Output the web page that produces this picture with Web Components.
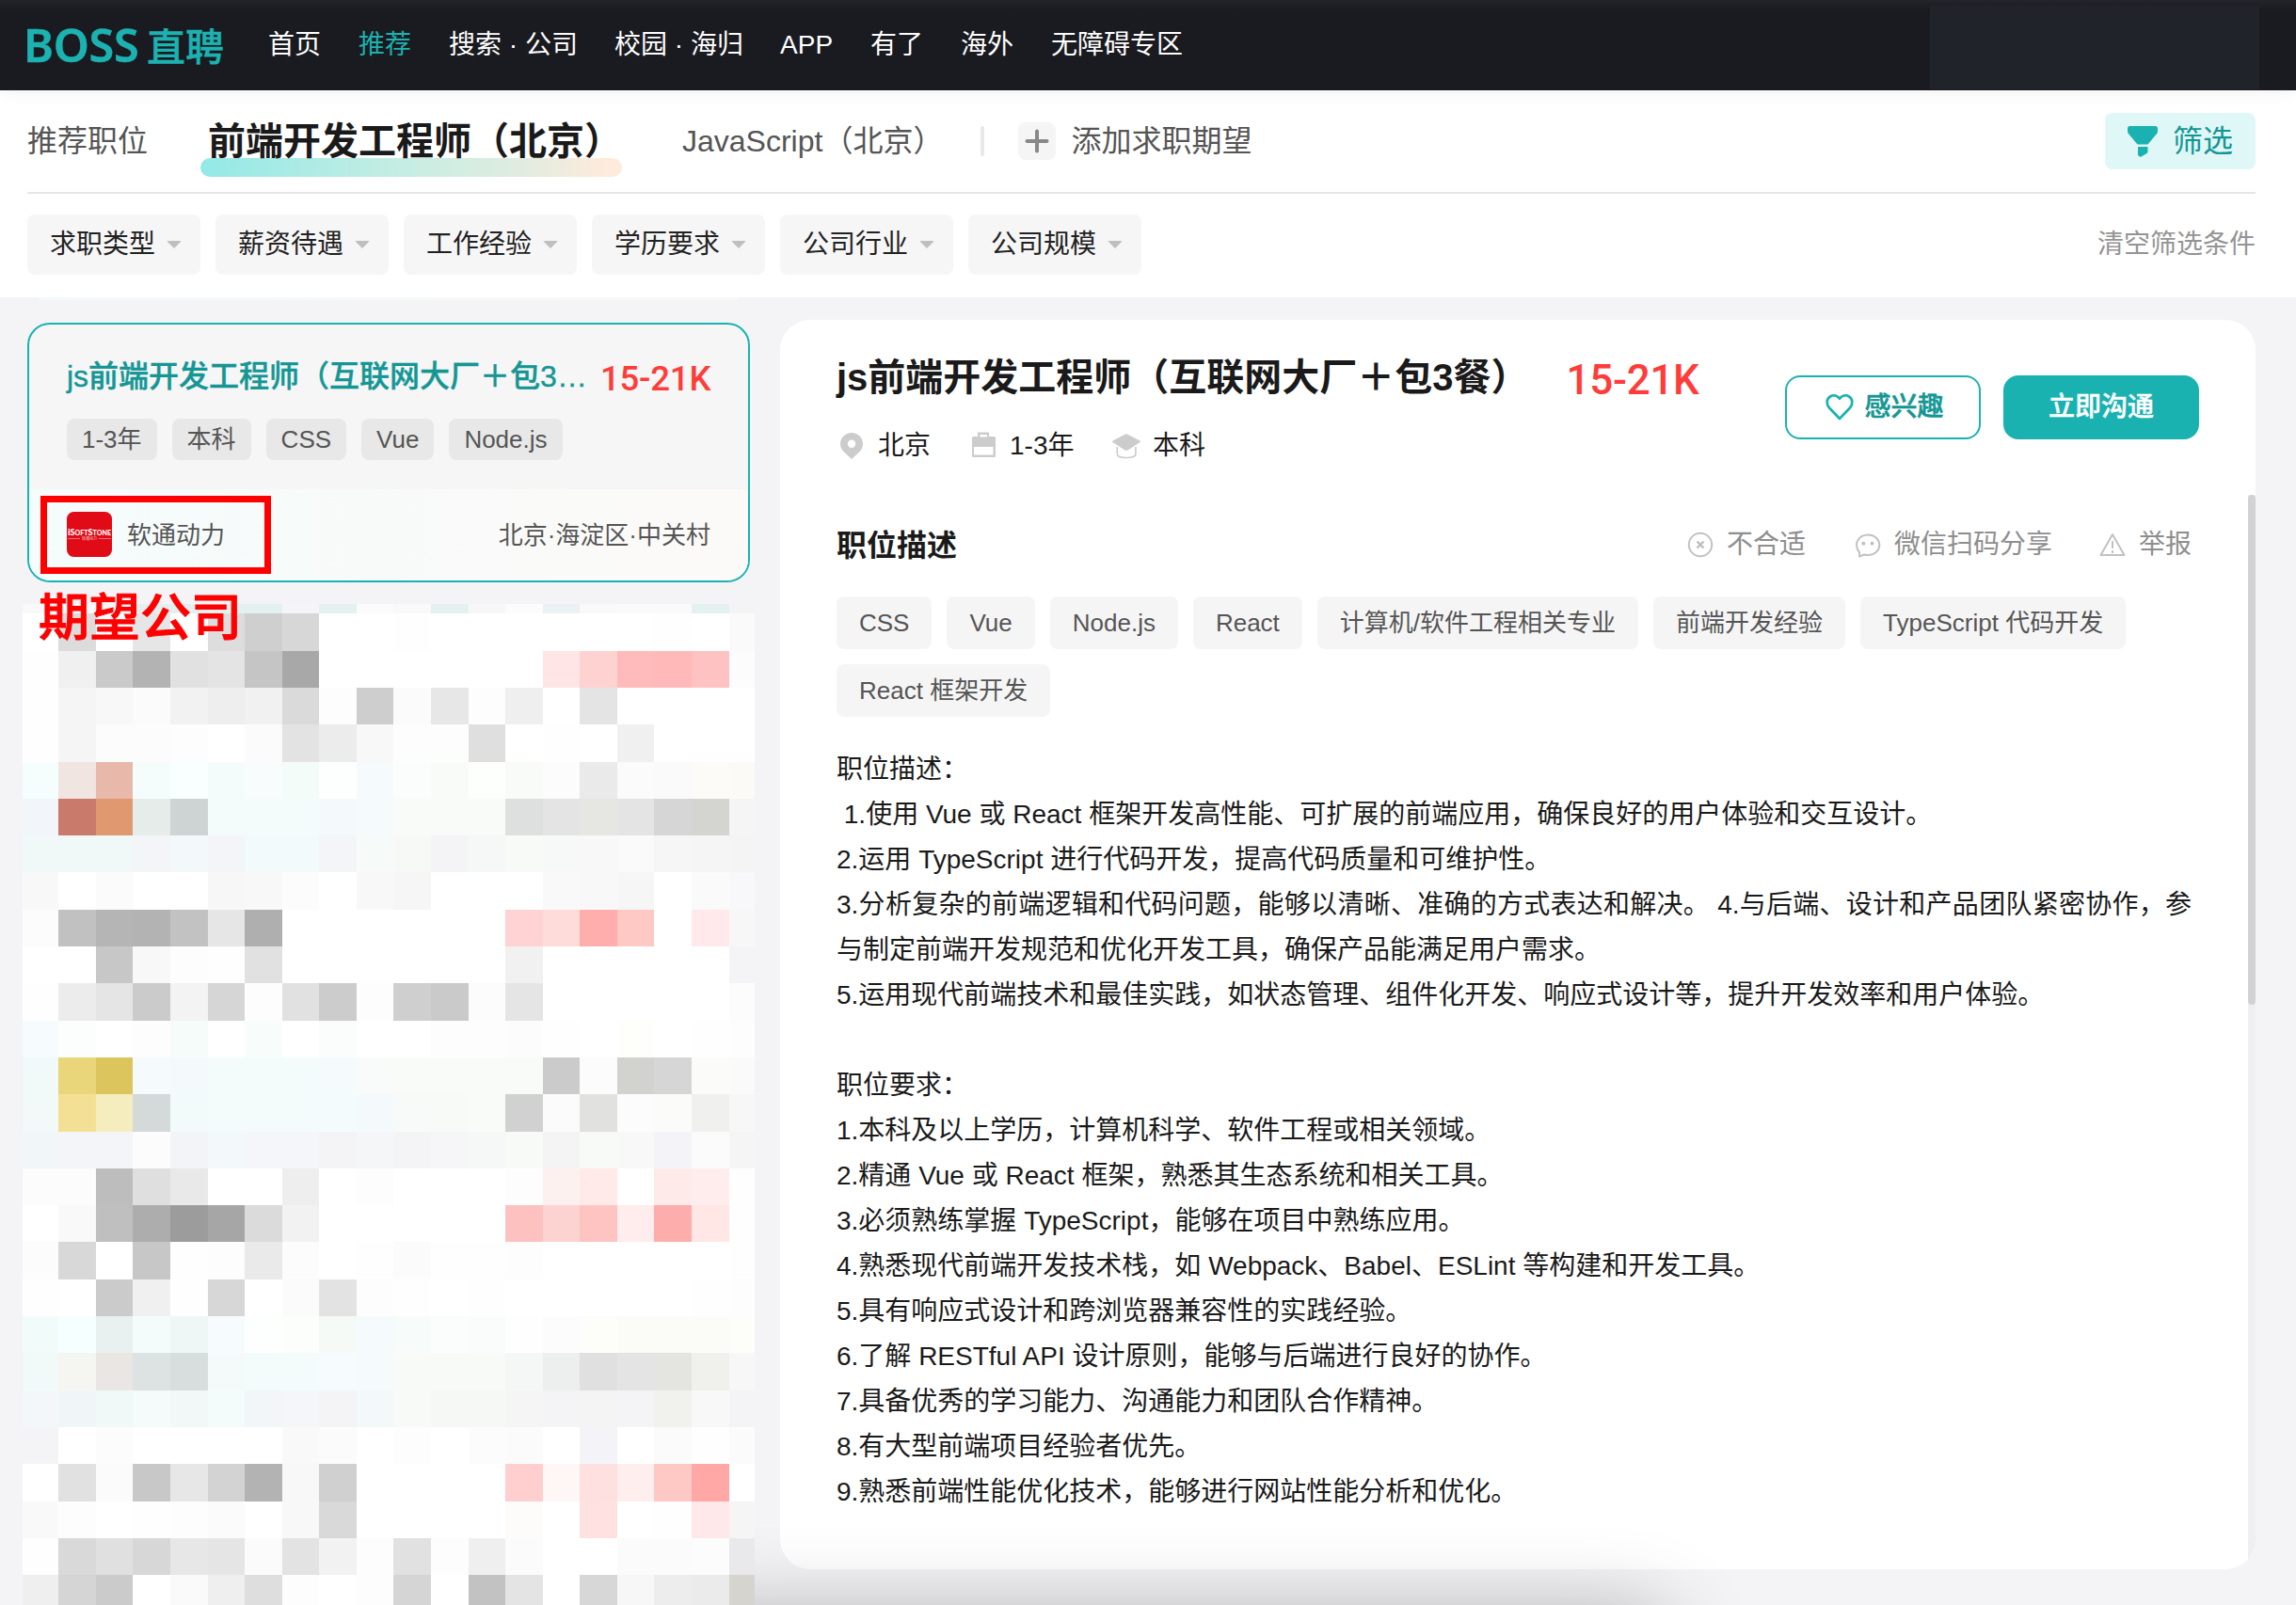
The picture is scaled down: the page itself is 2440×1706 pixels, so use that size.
<!DOCTYPE html>
<html lang="zh-CN">
<head>
<meta charset="utf-8">
<title>BOSS直聘</title>
<style>
html,body{margin:0;padding:0}
body{width:2440px;height:1706px;overflow:hidden;background:#f4f4f7;font-family:"Liberation Sans","Noto Sans CJK SC",sans-serif;color:#1a1a1a}
</style>
</head>
<body>
<boss-app></boss-app>
<script>
const define = (name, html, setup) => customElements.define(name, class extends HTMLElement {
  constructor() {
    super();
    const root = this.attachShadow({ mode: 'open' });
    root.innerHTML = html;
    this.root = root;
  }
  connectedCallback() { if (setup && !this.ready) { this.ready = true; setup(this, this.root); } }
});

/* ---------- top navigation ---------- */
define('boss-header', `
<style>
:host{display:flex;align-items:center;height:96px;box-sizing:border-box;padding:0 39px 0 25px;background:linear-gradient(#212429,#1a1b20 11px);color:#fff;font-size:28px;line-height:40px;white-space:nowrap;position:relative;z-index:2;box-shadow:0 0 18px rgba(0,0,0,.07)}
.logo{display:flex;align-items:center;color:#1cb2b1;width:260px;height:92px;padding-bottom:3px;box-sizing:border-box}
.en{font:600 48.500px/60px "Noto Sans","Open Sans",sans-serif;width:131px;letter-spacing:-.3px;-webkit-text-stroke:.5px #1cb2b1}
.cn{font:500 41px/60px "Noto Sans CJK SC",sans-serif;-webkit-text-stroke:.4px #1cb2b1}
nav{display:flex;gap:40px;height:94px;align-items:center}
nav span{min-width:56px}
.on{color:#1cb2b1}
.wide{width:136px}
.user{margin-left:auto;width:350px;height:89px;background:#20232a;align-self:flex-end;margin-bottom:1px}
</style>
<div class="logo"><span class="en">BOSS</span><span class="cn">直聘</span></div>
<nav><span>首页</span><span class="on">推荐</span><span class="wide">搜索 · 公司</span><span class="wide">校园 · 海归</span><span>APP</span><span>有了</span><span>海外</span><span>无障碍专区</span></nav>
<div class="user"></div>`);

/* ---------- expectation tabs ---------- */
define('expect-tabs', `
<style>
:host{display:flex;align-items:center;height:108px;margin:0 43px 0 29px;border-bottom:2px solid #e6e6e6;font-size:32px;line-height:44px;color:#555;white-space:nowrap}
.active{font-size:40px;font-weight:700;color:#1a1a1a;height:76px;line-height:60px;margin-left:56px;width:448px;display:grid;align-self:flex-end;margin-bottom:16px}
.active span,.active i{grid-area:1/1}
.active span{padding-left:8px;z-index:1;margin-top:8px}
.active i{height:20px;align-self:end;border-radius:10px;background:linear-gradient(90deg,#93e9e7,#c8ede2 50%,#e3ece0 78%,#ffebdc 97%)}
.js{margin-left:64px}
.bar{width:4px;height:32px;background:#e8e8e8;border-radius:2px;margin-left:40px}
.plus{width:40px;height:40px;margin:0 16px 0 36px;border-radius:8px;background:#f5f5f6}
.plus svg,.filter svg{display:block}
.filter{margin-left:auto;display:flex;align-items:center;box-sizing:border-box;width:160px;height:60px;padding-left:24px;gap:16px;background:#dff7f7;border-radius:8px;color:#149695}
</style>
<span>推荐职位</span>
<div class="active"><i></i><span>前端开发工程师（北京）</span></div>
<span class="js">JavaScript（北京）</span>
<div class="bar"></div>
<div class="plus"><svg width="40" height="40"><path d="M20 9.500v21M9.500 20h21" stroke="#888" stroke-width="4" stroke-linecap="round"/></svg></div>
<span>添加求职期望</span>
<div class="filter"><svg width="32" height="34"><path d="M2.500 1h27a2.500 2.500 0 0 1 2.500 2.500v3q0 1.500-1 2.700L21.500 20.500h-11L1 9.200Q0 8 0 6.500v-3A2.500 2.500 0 0 1 2.500 1zM11 23h10.500v5q0 1.300-1 2l-6 3.500q-1.500.7-2-.4L11 32z" fill="#19b2b1"/></svg><span>筛选</span></div>`);

/* ---------- filter chips ---------- */
define('filter-chip', `
<style>
:host{display:flex;align-items:center;box-sizing:border-box;width:184px;height:64px;padding-left:24px;gap:12px;border-radius:8px;background:#f6f6f6;font-size:28px;line-height:40px;color:#222;white-space:nowrap}
i{border:8px solid transparent;border-top:8px solid #bfbfbf;border-bottom:0;border-radius:2px}
</style><slot></slot><i></i>`);
define('filter-bar', `
<style>
:host{display:flex;align-items:center;gap:16px;height:110px;box-sizing:border-box;padding:0 43px 2px 29px}
.clear{margin-left:auto;font-size:28px;line-height:40px;color:#949494}
</style>
<filter-chip>求职类型</filter-chip><filter-chip>薪资待遇</filter-chip><filter-chip>工作经验</filter-chip><filter-chip>学历要求</filter-chip><filter-chip>公司行业</filter-chip><filter-chip>公司规模</filter-chip><span class="clear">清空筛选条件</span>`);

/* ---------- tag pill ---------- */
define('job-tag', `
<style>
:host{display:inline-flex;align-items:center;justify-content:center;box-sizing:border-box;height:56px;padding:0 24px;border-radius:8px;background:#f5f5f5;color:#555;font-size:26px;line-height:36px;white-space:nowrap}
:host([small]){height:44px;padding:0 16px;background:#e8e8e8}
</style><slot></slot>`);

/* ---------- selected job card ---------- */
define('job-card', `
<style>
:host{display:block;position:relative;box-sizing:border-box;width:768px;height:276px;border:2px solid #1ab2b1;border-radius:24px;background:#f6f6f6}
.top{height:175px;box-sizing:border-box;padding:33px 40px 0}
.row{display:flex;justify-content:space-between;height:44px;align-items:center;white-space:nowrap}
.title{font-size:32px;line-height:44px;font-weight:500;color:#149695;-webkit-text-stroke:.4px #149695}
.pay{font:500 36.500px/44px Roboto,sans-serif;color:#fe3d3a;padding-top:5px;width:117px;letter-spacing:-.2px}
.tags{display:flex;gap:16px;margin-top:23px}
.bottom{display:flex;align-items:center;height:97px;box-sizing:border-box;padding:1px 40px 0;border-radius:0 0 22px 22px;background:linear-gradient(90deg,#f4fcfc,#f8faf9 50%,#fcfaf8);font-size:26px;line-height:36px;color:#555}
.logo{width:48px;height:48px;margin:-2px 16px 0 0}
.loc{margin-left:auto}
.mark{position:absolute;left:12px;top:182px;width:245px;height:83px;box-sizing:border-box;border:7px solid #f00}
.note{position:absolute;left:10px;top:270px;font:500 54px/76px "Noto Sans CJK SC",sans-serif;-webkit-text-stroke:1px #f00;color:#f00;white-space:nowrap;z-index:3}
</style>
<div class="top">
<div class="row"><span class="title">js前端开发工程师（互联网大厂＋包3…</span><span class="pay">15-21K</span></div>
<div class="tags"><job-tag small>1-3年</job-tag><job-tag small>本科</job-tag><job-tag small>CSS</job-tag><job-tag small>Vue</job-tag><job-tag small>Node.js</job-tag></div>
</div>
<div class="bottom">
<svg class="logo" viewBox="0 0 48 48"><rect width="48" height="48" rx="7.500" fill="#e00b17"/><g fill="#fff" font-family="Lato,sans-serif" font-weight="900"><text x="1" y="25" font-size="10" textLength="46" lengthAdjust="spacingAndGlyphs">i<tspan font-size="9">S</tspan><tspan font-size="7">OFT</tspan><tspan font-size="9">S</tspan><tspan font-size="7">TONE</tspan></text></g><path d="M1 28.500h13M34 28.500h13" stroke="#fff" stroke-width=".6" opacity=".7"/><text x="16" y="30.300" font-size="4" fill="#fff" opacity=".75" font-family="Noto Sans CJK SC">软通动力</text></svg>
<span>软通动力</span><span class="loc">北京·海淀区·中关村</span></div>
<div class="mark"></div><div class="note">期望公司</div>`);

/* ---------- pixelated list: two hex digits are a grey, six a colour ---------- */
const MOSAIC = `
f9 f9 f4f5f7 e3f0f0 e3f0f0 e3f0f0 e3f0f0 f5f5f9 e4f1f0 fb f9 e4f1f0 f7 fc eaf2f5 f9 fa fa e4f1f0 f4f4f7
ff dc ff e6 ff dd cf d7 ff ff fe ff ff ff ff ff ff fe ff fa
fe f0 ca b3 e1 e4 c5 a8 ff ff ff ff ff ff ffe5e5 ffd2d2 ffbbbb ffb9b9 ffc2c2 fc
fe f5 f8 fb f2 ee f1 da fd ce fb e7 fd ef ff e4 ff ff ff ff
fe f5 fc fc fd ff fb e3 ec f8 fd fd df ff fe ff f0 ff ff ff
f5fdfd f0e5e1 e8b9aa f5fcfc f9feff f4fcfb f8fcfd f4fcfa fcfffd f5fbfd fbfdfc f9fbf9 fdfffd f9fbf9 fc ea fb fa fcfbf8 fcfaf7
f2f5fa c97a6a df9870 e6ecea ced4d3 f4fcfb f4fcfb f4fcfb f4fafc f5fafc f9fbf9 f9fbf9 f9fbf9 dde0de e4 e6e6e3 e4 d6 d4d4d1 f5
f1f9f8 f1f8f8 f1f8f8 f4f5f8 f3f9fa f4f5f8 f3fafb f3fafb f4f5f8 f6faf9 f7f9f7 f4f4f7 f6f8f7 f8faf8 f7f9f8 f8 fa f6 f5 f4f4f5
f8 ff fb ff ff f7 f8 fc ff f8 f6 ff ff ff f9 f8 f6 ff fa f8f8fa
fc c1 b5 b3 c2 e6 af ff ff ff ff ff ff ffd2d3 fddcda ffadad fec8c5 ff ffe9ea f7
ff ff c7 f8 fd fe e1 ff ff ff ff ff ff f1 ff ff ff ff ff f4f4f7
fe ec e5 cb f3 d6 fd e1 cc fd cf ca fc e5 ff ff ff ff ff fc
f6fbfd fbfefd ff fd f6fcfa ff f8fdfc ff fbfdfc ff ff fd fd fc fe ff fefefb ff fe fd
f2f9f9 e9d67b ddc55d f5fbfc f4fafb f4fcfb f4fcfb f4fcfb f5fbfc f8fbfa f9fbf9 f9fbf9 f9fbf9 f9fbf9 cb fc d2d2cf d6 fbfbf9 fa
f2f9f8 f3e095 f5edbe d4dad9 f2fafa f4fbfb f4fcfb f4fcfb f4fbfd f4fafc f8faf9 f8faf8 f9fbf9 d1 fb e1e1df fc fbfbf9 f0f0ee f7
f1f6f8 f3f5f8 f3f5f8 fc f3f4f7 f3f8fa f5f6f9 f4f6f9 f4f4f7 f5f6f8 f4f4f7 f6f6f9 f6f8f7 f8faf8 f4 f7faf7 f8 f4f4f8 fb f5
fc fc bd df e9 ff ff ee ff fd ff ff ff fd fdf1f0 ffe9e9 ff ffeaea ffedee fe
ff f9 bf ad 9c a6 db f2 ff ff ff ff ff fdc2c0 fcd3d0 fdc4c2 ffeded fdadac ffe7e5 fe
fc d8 ff c7 fe fd ea fc ff fe fb fe fe fd ff ff ff ff ff fe
fe ff cb f0 fe d7 ff fb e3 fd fe ff fe ff ff ff ff ff fe fd
f0fbfa f6ffff e8f0f0 f3fbfb eef6f6 f6fcfd fdfffe fcfefb f5faf7 f5fbfc f7fbf9 fafdfb fafcfb fe fc fdfdfa fbfbf8 fbfbf8 fbfbf8 fdfdfa
f2f9f9 f5f5f2 e9e6e4 dde3e2 d8dedd f4fafa f4fcfb f4fcfb f6fbfd f5fbfc f8faf8 f8faf8 f8faf8 f4f7f6 ecefed e0 e4 e4e4e1 f0f0ed f7
f3f7f9 f0f6f8 f1f9f8 f4fbfa f2f7f8 f3fbfb f2f6f8 f4f6f9 f4f4f7 f3f8fa f8faf7 f6f8f6 f6f8f6 f5 f4f4f7 f4 f4f4f7 f1f1ee f8 f4f4f7
f4f4f7 ff fc ff ff ff ff f9 fb ff fd ff fc fb ff f4f4f8 ff fb fe fb
ff e1 fb c8 e7 d3 b3 f8 d0 ff ff ff ff ffcfcf fef7f6 ffe0e1 ffeeee fec8c5 ffa8a6 ff
f9 fd ff fe fd fb ff f8 d9 ff ff ff ff fefcfa ff ffe1e2 ff fe ffe8e9 f5
fe d9 e0 d7 e7 e5 fb e3 f2 fd e1 fd ef fb ff ff fb fb fc e9e9eb
ef d5 cb ff fa ef de fd ff fd d5 ff c2 e4 ff d7 f7 ed eb d6d4cf`;
const diffs = a => a.slice(1).map((v, i) => (v - a[i]) + 'px').join(' ');
const XS = [24,62,102,141,181,221,260,300,339,379,418,458,498,537,577,616,656,695,735,775,802];
const YS = [642,652,692,731,770,810,849,888,927,967,1006,1045,1085,1124,1163,1203,1242,1281,1320,1360,1399,1438,1478,1517,1556,1596,1635,1674,1706];
define('pixel-list', `
<style>:host{display:grid;width:778px;position:relative;z-index:1}</style>`, (el, root) => {
  el.style.gridTemplateColumns = diffs(XS);
  el.style.gridTemplateRows = diffs(YS);
  for (const c of MOSAIC.trim().split(/\s+/)) {
    const d = document.createElement('div');
    d.style.background = '#' + (c.length === 2 ? c + c + c : c);
    root.append(d);
  }
});

/* ---------- job detail ---------- */
define('job-detail', `
<style>
:host{display:grid;grid-template-columns:1560px 8px;width:1568px;height:1328px;border-radius:32px;background:#fff;overflow:hidden}
.main{padding:0 52px 0 60px}
.head{display:flex;justify-content:space-between;height:186px}
.line{display:flex;align-items:center;height:60px;margin-top:31px;white-space:nowrap}
h1{margin:0 40px 0 0;font-size:40px;line-height:60px;font-weight:700}
.pay{font:500 44px/60px Roboto,sans-serif;color:#fe3d3a;padding-top:5px;letter-spacing:-.3px}
.meta{display:flex;align-items:center;height:40px;margin-top:23px;font-size:28px;line-height:40px}
.meta svg{display:block;width:32px;height:32px;margin:-1px 12px 0 0}
.meta span{width:96px}
.meta .y{width:108px}
.btns{display:flex;gap:24px;margin-top:59px}
.btn{display:flex;align-items:center;justify-content:center;box-sizing:border-box;width:208px;height:68px;border-radius:16px;border:2px solid #1ab2b1;font-size:28px;line-height:40px;font-weight:500;color:#149695;gap:10px;padding-left:3px;-webkit-text-stroke:.5px #149695}
.btn.solid{background:#1ab2b1;color:#fff;padding:0;-webkit-text-stroke:.4px #fff}
.sub{display:flex;align-items:center;height:48px;margin-top:31px;font-size:28px;color:#8e8e8e;line-height:44px;white-space:nowrap}
h2{margin:-3px auto 0 0;font-size:32px;line-height:44px;color:#1a1a1a}
.sub svg{display:block;width:28px;height:28px;margin:-5px 14px 0 0;flex:none}
.sub span{margin-right:52px;margin-top:-4px}
.sub .w{margin-right:50px}
.sub span:last-child{margin-right:8px}
.tags{display:flex;flex-wrap:wrap;gap:16px;margin-top:29px}
.desc{margin-top:32px;font-size:28px;line-height:48px;white-space:pre;width:1440px}
.desc div{height:48px}
.desc .full{white-space:normal;text-align:justify;text-align-last:justify}
.track{background:#efeff1;margin-top:186px}
.thumb{height:542px;border-radius:4px;background:#d2d2d4}
</style>
<div class="main">
<div class="head">
 <div>
  <div class="line"><h1>js前端开发工程师（互联网大厂＋包3餐）</h1><span class="pay">15-21K</span></div>
  <div class="meta">
   <svg viewBox="0 0 32 32"><path fill-rule="evenodd" d="M16 2a12 12 0 0 1 12 12c0 4-2 6.500-4 8.500L16 30l-8-7.500C6 20.500 4 18 4 14A12 12 0 0 1 16 2zm0 7.500a4.200 4.200 0 1 0 0 8.400 4.200 4.200 0 0 0 0-8.400z" fill="#ccc"/></svg><span>北京</span>
   <svg viewBox="0 0 32 32"><path fill-rule="evenodd" d="M10 1.500h12V6h5.500A1.500 1.500 0 0 1 29 7.500v19a1.500 1.500 0 0 1-1.500 1.500h-22A1.500 1.500 0 0 1 4 26.500v-19A1.500 1.500 0 0 1 5.500 6H10zM12.500 4v2.500h7.500V4zM6 17v8.500h20.500V17z" fill="#ccc"/></svg><span class="y">1-3年</span>
   <svg viewBox="0 0 32 32"><path d="M15 3.500Q16 3 17 3.500L30.500 10.500Q31.500 11.300 30.500 12L17.500 20.500Q16 21.300 14.500 20.500L1.500 12Q.5 11.300 1.500 10.500z" fill="#ccc"/><path d="M6.300 17v7.500q0 4 9.800 4t9.800-4V17" fill="none" stroke="#ccc" stroke-width="1.700"/></svg><span>本科</span>
  </div>
 </div>
 <div class="btns">
  <div class="btn"><svg width="32" height="32" viewBox="0 0 32 32"><path d="M16 28 5 16.500C1.500 12.500 2 7 6 4.500 9.500 2.300 13.500 3.600 16 6.700 18.500 3.600 22.500 2.300 26 4.500 30 7 30.500 12.500 27 16.500z" fill="none" stroke="#1ab2b1" stroke-width="2.700" stroke-linejoin="round"/></svg><span>感兴趣</span></div>
  <div class="btn solid">立即沟通</div>
 </div>
</div>
<div class="sub"><h2>职位描述</h2>
 <svg viewBox="0 0 28 28"><circle cx="14" cy="14" r="12.200" fill="none" stroke="#c2c2c2" stroke-width="2"/><path d="M10.500 10.500l7 7M17.500 10.500l-7 7" stroke="#bdbdbd" stroke-width="2.400"/></svg><span>不合适</span>
 <svg viewBox="0 0 28 28"><path d="M5 26.500V22C-1.500 14 3.500 3.500 14 3.500c7.500 0 12.300 5 12.300 10.800S21.500 25 14 25c-1.500 0-2.600-.2-3.800-.5z" fill="none" stroke="#c2c2c2" stroke-width="2" stroke-linejoin="round"/><circle cx="9.300" cy="12.700" r="1.900" fill="#bdbdbd"/><circle cx="18.500" cy="12.700" r="1.900" fill="#bdbdbd"/></svg><span class="w">微信扫码分享</span>
 <svg viewBox="0 0 28 28"><path d="M14 3 26.500 25h-25z" fill="none" stroke="#c2c2c2" stroke-width="2" stroke-linejoin="round"/><path d="M14 10v8M14 20v3" stroke="#c2c2c2" stroke-width="2"/></svg><span>举报</span>
</div>
<div class="tags"><job-tag>CSS</job-tag><job-tag>Vue</job-tag><job-tag>Node.js</job-tag><job-tag>React</job-tag><job-tag>计算机/软件工程相关专业</job-tag><job-tag>前端开发经验</job-tag><job-tag>TypeScript 代码开发</job-tag><job-tag>React 框架开发</job-tag></div>
<div class="desc"><div>职位描述：</div><div> 1.使用 Vue 或 React 框架开发高性能、可扩展的前端应用，确保良好的用户体验和交互设计。</div><div>2.运用 TypeScript 进行代码开发，提高代码质量和可维护性。</div><div class="full">3.分析复杂的前端逻辑和代码问题，能够以清晰、准确的方式表达和解决。 4.与后端、设计和产品团队紧密协作，参</div><div>与制定前端开发规范和优化开发工具，确保产品能满足用户需求。</div><div>5.运用现代前端技术和最佳实践，如状态管理、组件化开发、响应式设计等，提升开发效率和用户体验。</div><div></div><div>职位要求：</div><div>1.本科及以上学历，计算机科学、软件工程或相关领域。</div><div>2.精通 Vue 或 React 框架，熟悉其生态系统和相关工具。</div><div>3.必须熟练掌握 TypeScript，能够在项目中熟练应用。</div><div>4.熟悉现代前端开发技术栈，如 Webpack、Babel、ESLint 等构建和开发工具。</div><div>5.具有响应式设计和跨浏览器兼容性的实践经验。</div><div>6.了解 RESTful API 设计原则，能够与后端进行良好的协作。</div><div>7.具备优秀的学习能力、沟通能力和团队合作精神。</div><div>8.有大型前端项目经验者优先。</div><div>9.熟悉前端性能优化技术，能够进行网站性能分析和优化。</div></div>
</div>
<div class="track"><div class="thumb"></div></div>`);

/* ---------- page ---------- */
define('boss-app', `
<style>
:host{display:block;position:relative;width:2440px;height:1706px;overflow:hidden}
.bars{background:#fff;height:220px}
.body{display:grid;grid-template-columns:805px 1568px;padding-left:24px;height:1390px}
.left{display:flex;flex-direction:column}
.sliver{height:3px;width:744px;margin-left:17px;background:linear-gradient(90deg,#f1fbfa,#f6f8f8 60%,#f8f8f7);border-radius:0 0 12px 12px}
job-card{margin:24px 0 23px 5px;z-index:2}
job-detail{margin-top:24px}
.glow{position:absolute;left:720px;top:1717px;width:1050px;height:120px;box-shadow:0 0 90px rgba(0,0,0,.3);border-radius:20px}
</style>
<boss-header></boss-header>
<div class="bars"><expect-tabs></expect-tabs><filter-bar></filter-bar></div>
<div class="body">
 <div class="left"><div class="sliver"></div><job-card></job-card><pixel-list></pixel-list></div>
 <job-detail></job-detail>
</div>
<div class="glow"></div>`);
</script>
</body>
</html>
